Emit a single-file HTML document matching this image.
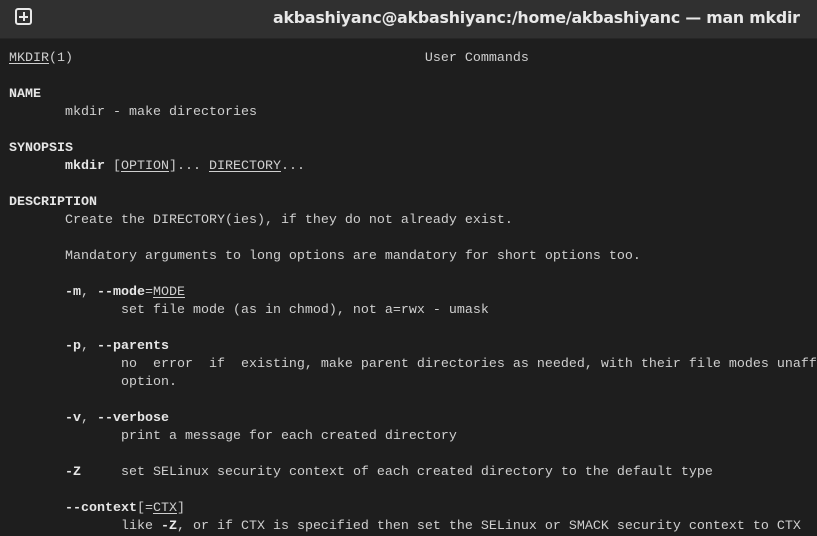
<!DOCTYPE html>
<html><head><meta charset="utf-8"><style>
html,body{margin:0;padding:0;background:#1e1e1e;width:817px;height:532px;overflow:hidden}
.bar{position:absolute;left:0;top:0;width:817px;height:38px;background:#303030;border-bottom:1px solid #262626}
.title{position:absolute;left:273px;top:0;height:38px;font:bold 15.8px "DejaVu Sans",sans-serif;line-height:36px;color:#e8e8e8;white-space:nowrap;letter-spacing:-0.2px}
.icon{position:absolute;left:15px;top:8px;width:13px;height:13px;border:2px solid #e8e8e8;border-radius:3px}
.icon:before{content:"";position:absolute;left:2px;top:5.5px;width:9px;height:2px;background:#e8e8e8}
.icon:after{content:"";position:absolute;left:5.5px;top:2px;width:2px;height:9px;background:#e8e8e8}
pre{position:absolute;left:9px;top:50px;margin:0;font:13.33px/18px "Liberation Mono",monospace;color:#cfcfcf;white-space:pre}
b{color:#e6e6e6}
u{text-underline-offset:2px}
</style></head><body>
<div class="bar"><div class="icon"></div><div class="title">akbashiyanc@akbashiyanc:/home/akbashiyanc — man mkdir</div></div>
<pre><u>MKDIR</u>(1)                                            User Commands

<b>NAME</b>
       mkdir - make directories

<b>SYNOPSIS</b>
       <b>mkdir</b> [<u>OPTION</u>]... <u>DIRECTORY</u>...

<b>DESCRIPTION</b>
       Create the DIRECTORY(ies), if they do not already exist.

       Mandatory arguments to long options are mandatory for short options too.

       <b>-m</b>, <b>--mode</b>=<u>MODE</u>
              set file mode (as in chmod), not a=rwx - umask

       <b>-p</b>, <b>--parents</b>
              no  error  if  existing, make parent directories as needed, with their file modes unaffected
              option.

       <b>-v</b>, <b>--verbose</b>
              print a message for each created directory

       <b>-Z</b>     set SELinux security context of each created directory to the default type

       <b>--context</b>[=<u>CTX</u>]
              like <b>-Z</b>, or if CTX is specified then set the SELinux or SMACK security context to CTX</pre>
</body></html>
